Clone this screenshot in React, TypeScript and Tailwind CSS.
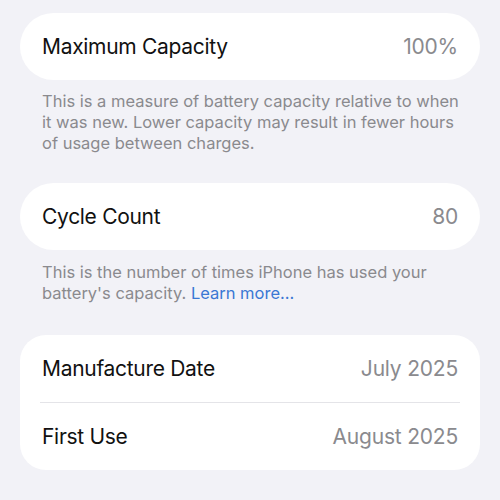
import React from "react";

const font = { fontFamily: "Inter, 'Noto Sans', sans-serif" };

function Row({ label, value }: { label: string; value: string }) {
  return (
    <div className="flex h-[67px] items-center justify-between px-[22px] pt-px">
      <span className="text-[21px] tracking-[-0.3px] text-[#111111]">{label}</span>
      <span className="text-[21px] tracking-[-0.2px] text-[#8a8a8e]">{value}</span>
    </div>
  );
}

export default function App() {
  return (
    <div className="h-[500px] w-[500px] overflow-hidden bg-[#f2f2f7] pt-[13px]" style={font}>
      <div className="mx-[20px] rounded-[34px] bg-white">
        <Row label="Maximum Capacity" value="100%" />
      </div>
      <p className="mt-[11px] pl-[42px] pr-[40px] text-[16.5px] leading-[21px] text-[#8a8a8e]">
        This is a measure of battery capacity relative to when it was new. Lower capacity may result in fewer hours of usage between charges.
      </p>
      <div className="mx-[20px] mt-[29px] rounded-[34px] bg-white">
        <Row label="Cycle Count" value="80" />
      </div>
      <p className="mt-[12px] pl-[42px] pr-[40px] text-[16.5px] leading-[21px] text-[#8a8a8e]">
        This is the number of times iPhone has used your battery's capacity. <span className="text-[#3a78d4]">Learn more...</span>
      </p>
      <div className="mx-[20px] mt-[31px] rounded-[26px] bg-white">
        <Row label="Manufacture Date" value="July 2025" />
        <div className="mx-[20px] h-px bg-[#e4e4e8]" />
        <Row label="First Use" value="August 2025" />
      </div>
    </div>
  );
}
